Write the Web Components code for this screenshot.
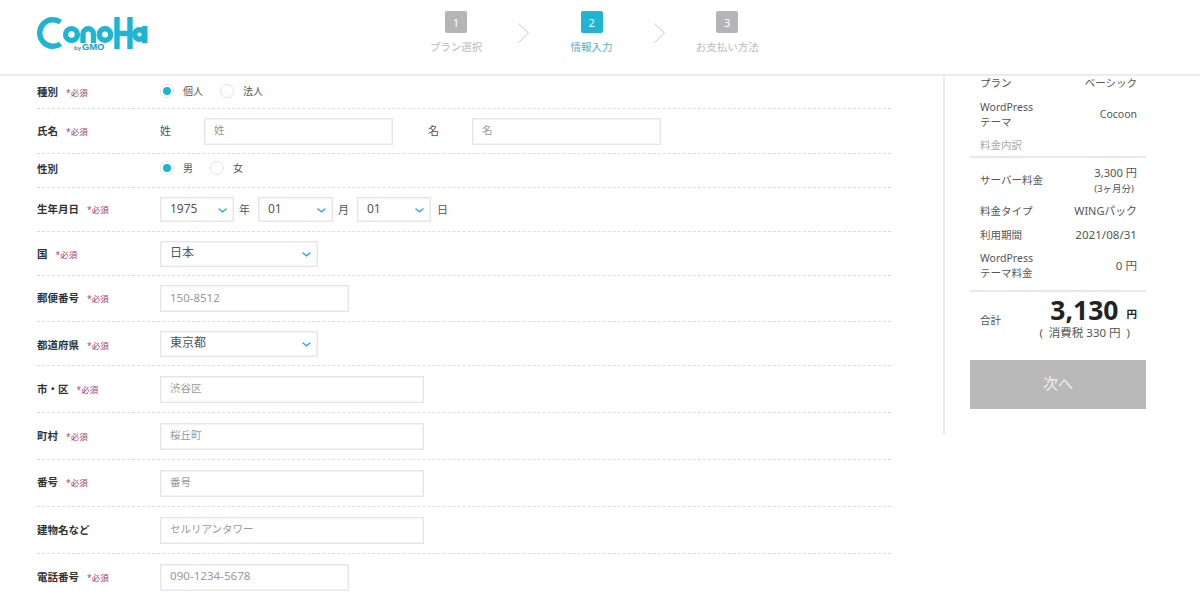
<!DOCTYPE html>
<html lang="ja"><head><meta charset="utf-8"><title>ConoHa</title>
<style>
html,body{margin:0;height:100%;overflow:hidden;background:#fff}
body{font-family:"Noto Sans","Noto Sans CJK JP",sans-serif;color:#444;font-size:10.5px}
small{display:block;font-size:9.5px;line-height:15px;white-space:nowrap}
</style></head><body>
<cn-page>
  <cn-header slot="header">
    <cn-logo></cn-logo>
    <cn-steps>
      <cn-step num="1">プラン選択</cn-step>
      <cn-chevron></cn-chevron>
      <cn-step num="2" active>情報入力</cn-step>
      <cn-chevron></cn-chevron>
      <cn-step num="3">お支払い方法</cn-step>
    </cn-steps>
  </cn-header>
  <cn-form slot="form">
    <cn-row label="種別" required style="height:33px">
      <cn-radio checked>個人</cn-radio><cn-radio style="margin-left:17px">法人</cn-radio>
    </cn-row>
    <cn-row label="氏名" required style="height:45px">
      <cn-text style="width:44px">姓</cn-text><cn-input style="width:189px">姓</cn-input>
      <cn-text style="margin-left:35px;width:44px">名</cn-text><cn-input style="width:189px">名</cn-input>
    </cn-row>
    <cn-row label="性別" style="height:34px;padding-bottom:3px">
      <cn-radio checked>男</cn-radio><cn-radio style="margin-left:17px">女</cn-radio>
    </cn-row>
    <cn-row label="生年月日" required style="height:44px">
      <cn-select style="width:74px;height:25px">1975</cn-select><cn-text style="width:24px;padding-left:5px">年</cn-text>
      <cn-select style="width:75px;height:25px">01</cn-select><cn-text style="width:24px;padding-left:5px">月</cn-text>
      <cn-select style="width:74px;height:25px">01</cn-select><cn-text style="padding-left:6px">日</cn-text>
    </cn-row>
    <cn-row label="国" required style="height:44px;--ly:2px"><cn-select style="width:158px">日本</cn-select></cn-row>
    <cn-row label="郵便番号" required style="height:46px"><cn-input style="width:189px;font-size:11.5px">150-8512</cn-input></cn-row>
    <cn-row label="都道府県" required style="height:44px;--ly:3px"><cn-select style="width:158px">東京都</cn-select></cn-row>
    <cn-row label="市・区" required style="height:47px"><cn-input style="width:264px">渋谷区</cn-input></cn-row>
    <cn-row label="町村" required style="height:47px"><cn-input style="width:264px">桜丘町</cn-input></cn-row>
    <cn-row label="番号" required style="height:47px;--ly:-1px"><cn-input style="width:264px">番号</cn-input></cn-row>
    <cn-row label="建物名など" style="height:47px"><cn-input style="width:264px">セルリアンタワー</cn-input></cn-row>
    <cn-row label="電話番号" required style="height:47px"><cn-input style="width:189px;font-size:11.6px">090-1234-5678</cn-input></cn-row>
  </cn-form>
  <cn-side slot="side">
    <cn-sum style="height:24px;margin-top:-5px"><span>プラン</span><span slot="value">ベーシック</span></cn-sum>
    <cn-sum style="height:38px;padding-top:1px;box-sizing:border-box"><span>WordPress<br>テーマ</span><span slot="value">Cocoon</span></cn-sum>
    <cn-caption>料金内訳</cn-caption>
    <cn-sum style="height:44px"><span>サーバー料金</span><span slot="value" style="font-size:11.2px">3,300 円<small>(3ヶ月分)</small></span></cn-sum>
    <cn-sum style="height:18px"><span>料金タイプ</span><span slot="value" style="font-size:10.9px">WINGパック</span></cn-sum>
    <cn-sum style="height:30px"><span>利用期間</span><span slot="value" style="font-size:11.6px">2021/08/31</span></cn-sum>
    <cn-sum style="height:31px;margin-bottom:9px"><span>WordPress<br>テーマ料金</span><span slot="value" style="font-size:11.6px">0 円</span></cn-sum>
    <cn-total></cn-total>
    <cn-button>次へ</cn-button>
  </cn-side>
</cn-page>
<script>
function def(name, css, html){
  customElements.define(name, class extends HTMLElement{
    constructor(){super();this.attachShadow({mode:"open"});}
    connectedCallback(){
      this.shadowRoot.innerHTML=`<style>${css}</style>${typeof html==="function"?html(this):html}`;
    }
  });
}
const CJK='"Noto Sans","Noto Sans CJK JP",sans-serif';
def("cn-page",`
  :host{display:grid;grid-template-columns:854px 203px;grid-template-rows:76px 1fr;column-gap:52px;height:594px;overflow:hidden;padding-left:37px;box-sizing:border-box}
  ::slotted([slot=header]){grid-column:1 / -1;margin-left:-37px}
`,`<slot name="header"></slot><slot name="form"></slot><slot name="side"></slot>`);
def("cn-header",`
  :host{display:flex;align-items:flex-start;width:1200px;height:76px;box-sizing:border-box;border-bottom:2px solid #ececec;padding-left:37px;background:#fff}
`,`<slot></slot>`);
def("cn-logo",`
  :host{display:block;width:112px;height:40px;margin-top:14px;position:relative}
  svg{display:block}
  span{position:absolute;left:36px;top:29px;font:700 6px/8px "Liberation Sans",sans-serif;color:#1a9cbc;white-space:nowrap;background:#fff;padding:0 1px}
  b{font-size:9.5px;letter-spacing:-.2px;margin-left:1px}
`,`<svg width="112" height="40" viewBox="0 0 112 40" fill="none" stroke="#1fb4d2" stroke-width="5.4" aria-label="ConoHa">
  <path d="M23.6 8.1A13.3 13.3 0 1 0 23.6 29.9"/>
  <circle cx="34.5" cy="20.5" r="5.9"/>
  <path d="M46 29V20a5 5 0 0 1 10.5 0V29"/>
  <circle cx="68" cy="20.5" r="5.7"/>
  <path d="M80 3V35M93 3V35M80 19.5H93"/>
  <circle cx="102.5" cy="20.5" r="4.8"/>
  <path d="M107.8 12V29"/>
</svg><span>by<b>GMO</b></span>`);
def("cn-steps",`:host{display:flex;align-items:flex-start;margin-left:257px;gap:12.3px}`,`<slot></slot>`);
def("cn-step",`
  :host{display:flex;flex-direction:column;align-items:center;width:100px;padding-top:11px;font-size:10.5px;color:#bbb}
  i{display:flex;align-items:center;justify-content:center;width:22px;height:22px;border-radius:2px;background:#b5b5b5;color:#fff;font-style:normal;font-size:11px;line-height:1}
  div{margin-top:6px;line-height:16px;white-space:nowrap}
  :host([active]){color:#52b1c9}
  :host([active]) i{background:#1fb4d2}
`,el=>`<i>${el.getAttribute("num")}</i><div><slot></slot></div>`);
def("cn-chevron",`:host{display:block;width:11px;height:20px;margin-top:23px}svg{display:block}`,
`<svg width="11" height="20" viewBox="0 0 11 20" fill="none" stroke="#c9c9c9" stroke-width="1"><path d="M.5.5 10.5 10 .5 19.5"/></svg>`);
def("cn-form",`:host{display:block}`,`<slot></slot>`);
def("cn-row",`
  :host{display:flex;align-items:center;box-sizing:border-box;border-bottom:1px dashed #dcdcdc}
  .l{flex:none;width:123px;margin-top:var(--ly,0);font-size:10.5px;font-weight:700;color:#333;line-height:14px;white-space:nowrap}
  .r{margin-left:8px;font-size:8.5px;font-weight:400;color:#a63a72}
  .c{display:flex;align-items:center}
`,el=>`<div class="l">${el.getAttribute("label")}${el.hasAttribute("required")?'<span class="r">*必須</span>':''}</div><div class="c"><slot></slot></div>`);
def("cn-radio",`
  :host{display:flex;align-items:center;margin-bottom:2px;font-size:10px;color:#555;line-height:14px}
  i{box-sizing:border-box;width:14px;height:14px;border-radius:50%;border:1px solid #e2e2e2;margin-right:9px;display:flex;align-items:center;justify-content:center;background:#fff}
  :host([checked]) i::after{content:"";width:8px;height:8px;border-radius:50%;background:#1fb4d2}
`,`<i></i><slot></slot>`);
def("cn-text",`:host{display:block;box-sizing:border-box;font-size:11px;color:#555;line-height:16px}`,`<slot></slot>`);
def("cn-input",`
  :host{display:flex;align-items:center;box-sizing:border-box;height:27px;border:1px solid #e6e6e6;box-shadow:inset 0 0 0 1px #f3f3f3;padding:0 9px 2px;font-size:10.5px;line-height:18px;color:#999;white-space:nowrap;background:#fff}
`,`<slot></slot>`);
def("cn-select",`
  :host{display:flex;align-items:center;justify-content:space-between;box-sizing:border-box;height:26px;border:1px solid #e6e6e6;box-shadow:inset 0 0 0 1px #f3f3f3;padding:0 6px 0 9px;font-size:12px;color:#555;line-height:18px;background:#fff}
  div{margin-top:-1px}
  svg{flex:none;display:block;margin-top:1px}
`,`<div><slot></slot></div><svg width="9" height="5" viewBox="0 0 9 5" fill="none" stroke="#2eb2cc" stroke-width="1.6" stroke-linecap="round"><path d="M1 1 4.5 3.8 8 1"/></svg>`);
def("cn-side",`
  :host{display:block;box-sizing:border-box;height:359px;border-left:2px solid #ececec;padding-left:25px}
  .w{width:176px}
`,`<div class="w"><slot></slot></div>`);
def("cn-sum",`
  :host{display:flex;align-items:center;justify-content:space-between;padding:0 9px 0 10px;font-size:10.5px;line-height:15px;color:#555}
  .v{text-align:left;white-space:nowrap}
`,`<div><slot></slot></div><div class="v"><slot name="value"></slot></div>`);
def("cn-caption",`
  :host{display:flex;align-items:center;box-sizing:border-box;height:25px;padding-left:10px;border-bottom:2px solid #e8e8e8;font-size:10.5px;color:#aaa;line-height:14px}
`,`<div><slot></slot></div>`);
def("cn-total",`
  :host{display:grid;grid-template-columns:auto 1fr;align-items:center;box-sizing:border-box;height:70px;border-top:2px solid #e8e8e8;padding:0 9px 13px 10px;color:#555;font-size:10.5px}
  .a{text-align:right;color:#222;font-weight:700;line-height:23px;font-size:26.5px;font-family:"Noto Sans",sans-serif;white-space:nowrap}
  .a span{font-size:10.5px;margin-left:8px;font-family:${CJK};vertical-align:2px}
  .b{text-align:right;font-size:11.5px;line-height:14px;white-space:pre;margin-right:7px}
`,`<div>合計</div><div><div class="a">3,130<span>円</span></div><div class="b">(  消費税 330 円  )</div></div>`);
def("cn-button",`
  :host{display:flex;align-items:center;justify-content:center;height:49px;background:#b9b9b9;color:#f1f1f1;font-size:15px;line-height:20px}
  div{margin-top:-3px}
`,`<div><slot></slot></div>`);
</script>
</body></html>
